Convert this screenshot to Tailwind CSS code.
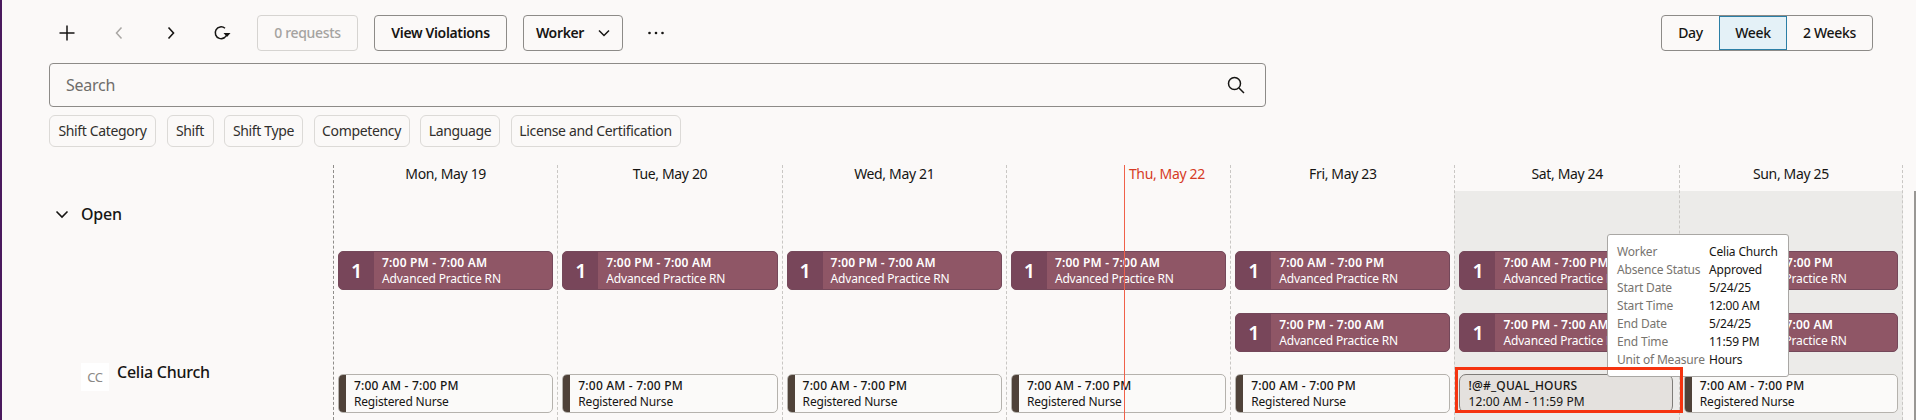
<!DOCTYPE html>
<html lang="en">
<head>
    <meta charset="UTF-8">
    <title>Schedule</title>
    <script src="https://cdn.jsdelivr.net/npm/@tailwindcss/browser@4"></script>
</head>
<body class="bg-[#fbf9f8] text-[#161513] font-['Noto_Sans',sans-serif] text-sm tracking-[-0.35px]">
<div class="relative h-[420px] w-[1916px] overflow-hidden border-l-2 border-[#4a1a5e]">

    <!-- Toolbar -->
    <div class="flex items-center h-[36px] mt-[15px] pl-[47px] pr-[43px]">
        <button class="w-[36px] flex justify-center">
            <svg class="w-[18px] h-[18px]" viewBox="0 0 18 18" fill="none" stroke="#161513" stroke-width="1.5"><path d="M9 1.5v15M1.5 9h15"/></svg>
        </button>
        <button class="w-[16px] ml-[26px] flex justify-center">
            <svg class="w-[10px] h-[14px]" viewBox="0 0 10 14" fill="none" stroke="#a9a7a4" stroke-width="1.5"><path d="M7.5 1.5 2.5 7l5 5.5"/></svg>
        </button>
        <button class="w-[16px] ml-[36px] flex justify-center">
            <svg class="w-[10px] h-[14px]" viewBox="0 0 10 14" fill="none" stroke="#161513" stroke-width="1.6"><path d="M2.5 1.5 7.5 7l-5 5.5"/></svg>
        </button>
        <button class="w-[18px] ml-[34px] flex justify-center">
            <svg class="w-[18px] h-[16px]" viewBox="0 0 18 16" fill="none" stroke="#161513" stroke-width="1.5"><path d="M14 8.5a5.9 5.9 0 1 1-2-5.2"/><path d="M10.5 8h7L14 12z" fill="#161513" stroke="none"/></svg>
        </button>
        <div class="ml-[26px] w-[101px] h-[36px] flex items-center justify-center rounded-[4px] border border-[#d6d4d1] text-[#a5a3a0] font-medium">0 requests</div>
        <button class="ml-[16px] w-[133px] h-[36px] rounded-[4px] border border-[#8d8b88] font-semibold">View Violations</button>
        <button class="ml-[16px] w-[100px] h-[36px] rounded-[4px] border border-[#8d8b88] font-semibold flex items-center justify-center gap-[14px]">
            Worker
            <svg class="w-[12px] h-[8px]" viewBox="0 0 12 8" fill="none" stroke="#161513" stroke-width="1.5"><path d="M1 1.5 6 6.5l5-5"/></svg>
        </button>
        <button class="ml-[23px] w-[20px] flex justify-center">
            <svg class="w-[18px] h-[4px]" viewBox="0 0 18 4" fill="#161513"><circle cx="2.5" cy="2" r="1.3"/><circle cx="9" cy="2" r="1.3"/><circle cx="15.5" cy="2" r="1.3"/></svg>
        </button>
        <div class="ml-auto flex h-[36px] rounded-[4px] border border-[#8d8b88] font-medium">
            <div class="w-[57px] flex items-center justify-center">Day</div>
            <div class="w-[68px] flex items-center justify-center bg-[#e4f1f7] outline outline-[#2b7fa6] -outline-offset-1">Week</div>
            <div class="w-[85px] flex items-center justify-center">2 Weeks</div>
        </div>
    </div>

    <!-- Search -->
    <div class="ml-[47px] mt-[12px] w-[1217px] h-[44px] flex items-center justify-between rounded-[4px] border border-[#8d8b88] pl-[16px] pr-[20px]">
        <span class="text-base text-[#6f6d6a] tracking-[-0.25px]">Search</span>
        <svg class="w-[18px] h-[18px]" viewBox="0 0 18 18" fill="none" stroke="#161513" stroke-width="1.5"><circle cx="7.5" cy="7.5" r="6"/><path d="m12 12 5 5"/></svg>
    </div>

    <!-- Filter chips -->
    <div class="ml-[47px] mt-[8px] flex gap-[10.5px] h-[32px] text-[#312f2c]">
        <div class="w-[107px] flex items-center justify-center rounded-[6px] border border-[#dcdad7]">Shift Category</div>
        <div class="w-[47px] flex items-center justify-center rounded-[6px] border border-[#dcdad7]">Shift</div>
        <div class="w-[79px] flex items-center justify-center rounded-[6px] border border-[#dcdad7]">Shift Type</div>
        <div class="w-[96px] flex items-center justify-center rounded-[6px] border border-[#dcdad7]">Competency</div>
        <div class="w-[80px] flex items-center justify-center rounded-[6px] border border-[#dcdad7]">Language</div>
        <div class="w-[170px] flex items-center justify-center rounded-[6px] border border-[#dcdad7]">License and Certification</div>
    </div>

    <!-- Schedule -->
    <div class="flex mt-[18px] h-[255px]">
        <!-- Row headers -->
        <div class="w-[331px] shrink-0 relative tracking-[-0.25px]">
            <div class="flex items-center h-[24px] mt-[37px] ml-[53px] text-base font-medium">
                <svg class="w-[14px] h-[9px] mr-[12px]" viewBox="0 0 14 9" fill="none" stroke="#161513" stroke-width="1.6"><path d="M1.5 1.5 7 7l5.5-5.5"/></svg>
                Open
            </div>
            <div class="flex mt-[137px] ml-[79px]">
                <div class="w-[28px] h-[28px] bg-white text-[#8b8986] text-[13px] flex items-center justify-center">CC</div>
                <div class="ml-[8px] -mt-[3px] text-base font-medium">Celia Church</div>
            </div>
        </div>

        <!-- Day columns -->
        <div class="grid grid-cols-[repeat(7,224.3px)] relative">
            <div class="border-l border-dashed border-[#8f8d8a] px-[4px]">
                <div class="h-[26px] pb-[8px] flex items-center justify-center">Mon, May 19</div>
                <div class="mt-[60px] h-[39px] flex rounded-[5px] border border-[#74485a] bg-[#8f5666] text-white overflow-hidden">
                    <div class="w-[35px] bg-[#78465a] flex items-center justify-center text-xl font-semibold">1</div>
                    <div class="pl-[8px] flex flex-col justify-center text-xs leading-[16px] tracking-[-0.18px]"><div class="font-semibold tracking-[0.2px]">7:00 PM - 7:00 AM</div><div>Advanced Practice RN</div></div>
                </div>
                <div class="mt-[84px] h-[39px] flex rounded-[5px] border border-[#b5b2ad] bg-[#fbfaf9] overflow-hidden">
                    <div class="w-[7px] bg-[#4f4239]"></div>
                    <div class="pl-[8px] flex flex-col justify-center text-xs leading-[16px] tracking-[-0.18px]"><div class="font-medium tracking-[0.2px]">7:00 AM - 7:00 PM</div><div>Registered Nurse</div></div>
                </div>
            </div>
            <div class="border-l border-dashed border-[#c9c7c4] px-[4px]">
                <div class="h-[26px] pb-[8px] flex items-center justify-center">Tue, May 20</div>
                <div class="mt-[60px] h-[39px] flex rounded-[5px] border border-[#74485a] bg-[#8f5666] text-white overflow-hidden">
                    <div class="w-[35px] bg-[#78465a] flex items-center justify-center text-xl font-semibold">1</div>
                    <div class="pl-[8px] flex flex-col justify-center text-xs leading-[16px] tracking-[-0.18px]"><div class="font-semibold tracking-[0.2px]">7:00 PM - 7:00 AM</div><div>Advanced Practice RN</div></div>
                </div>
                <div class="mt-[84px] h-[39px] flex rounded-[5px] border border-[#b5b2ad] bg-[#fbfaf9] overflow-hidden">
                    <div class="w-[7px] bg-[#4f4239]"></div>
                    <div class="pl-[8px] flex flex-col justify-center text-xs leading-[16px] tracking-[-0.18px]"><div class="font-medium tracking-[0.2px]">7:00 AM - 7:00 PM</div><div>Registered Nurse</div></div>
                </div>
            </div>
            <div class="border-l border-dashed border-[#c9c7c4] px-[4px]">
                <div class="h-[26px] pb-[8px] flex items-center justify-center">Wed, May 21</div>
                <div class="mt-[60px] h-[39px] flex rounded-[5px] border border-[#74485a] bg-[#8f5666] text-white overflow-hidden">
                    <div class="w-[35px] bg-[#78465a] flex items-center justify-center text-xl font-semibold">1</div>
                    <div class="pl-[8px] flex flex-col justify-center text-xs leading-[16px] tracking-[-0.18px]"><div class="font-semibold tracking-[0.2px]">7:00 PM - 7:00 AM</div><div>Advanced Practice RN</div></div>
                </div>
                <div class="mt-[84px] h-[39px] flex rounded-[5px] border border-[#b5b2ad] bg-[#fbfaf9] overflow-hidden">
                    <div class="w-[7px] bg-[#4f4239]"></div>
                    <div class="pl-[8px] flex flex-col justify-center text-xs leading-[16px] tracking-[-0.18px]"><div class="font-medium tracking-[0.2px]">7:00 AM - 7:00 PM</div><div>Registered Nurse</div></div>
                </div>
            </div>
            <div class="border-l border-dashed border-[#c9c7c4] px-[4px]">
                <div class="h-[26px] pb-[8px] flex items-center pl-[118px] text-[#d63b25]">Thu, May 22</div>
                <div class="mt-[60px] h-[39px] flex rounded-[5px] border border-[#74485a] bg-[#8f5666] text-white overflow-hidden">
                    <div class="w-[35px] bg-[#78465a] flex items-center justify-center text-xl font-semibold">1</div>
                    <div class="pl-[8px] flex flex-col justify-center text-xs leading-[16px] tracking-[-0.18px]"><div class="font-semibold tracking-[0.2px]">7:00 PM - 7:00 AM</div><div>Advanced Practice RN</div></div>
                </div>
                <div class="mt-[84px] h-[39px] flex rounded-[5px] border border-[#b5b2ad] bg-[#fbfaf9] overflow-hidden">
                    <div class="w-[7px] bg-[#4f4239]"></div>
                    <div class="pl-[8px] flex flex-col justify-center text-xs leading-[16px] tracking-[-0.18px]"><div class="font-medium tracking-[0.2px]">7:00 AM - 7:00 PM</div><div>Registered Nurse</div></div>
                </div>
            </div>
            <div class="border-l border-dashed border-[#c9c7c4] px-[4px]">
                <div class="h-[26px] pb-[8px] flex items-center justify-center">Fri, May 23</div>
                <div class="mt-[60px] h-[39px] flex rounded-[5px] border border-[#74485a] bg-[#8f5666] text-white overflow-hidden">
                    <div class="w-[35px] bg-[#78465a] flex items-center justify-center text-xl font-semibold">1</div>
                    <div class="pl-[8px] flex flex-col justify-center text-xs leading-[16px] tracking-[-0.18px]"><div class="font-semibold tracking-[0.2px]">7:00 AM - 7:00 PM</div><div>Advanced Practice RN</div></div>
                </div>
                <div class="mt-[23px] h-[39px] flex rounded-[5px] border border-[#74485a] bg-[#8f5666] text-white overflow-hidden">
                    <div class="w-[35px] bg-[#78465a] flex items-center justify-center text-xl font-semibold">1</div>
                    <div class="pl-[8px] flex flex-col justify-center text-xs leading-[16px] tracking-[-0.18px]"><div class="font-semibold tracking-[0.2px]">7:00 PM - 7:00 AM</div><div>Advanced Practice RN</div></div>
                </div>
                <div class="mt-[22px] h-[39px] flex rounded-[5px] border border-[#b5b2ad] bg-[#fbfaf9] overflow-hidden">
                    <div class="w-[7px] bg-[#4f4239]"></div>
                    <div class="pl-[8px] flex flex-col justify-center text-xs leading-[16px] tracking-[-0.18px]"><div class="font-medium tracking-[0.2px]">7:00 AM - 7:00 PM</div><div>Registered Nurse</div></div>
                </div>
            </div>
            <div class="border-l border-dashed border-[#c9c7c4] px-[4px] bg-[linear-gradient(#fbf9f8_26px,#ecebe9_26px)]">
                <div class="h-[26px] pb-[8px] flex items-center justify-center">Sat, May 24</div>
                <div class="mt-[60px] h-[39px] flex rounded-[5px] border border-[#74485a] bg-[#8f5666] text-white overflow-hidden">
                    <div class="w-[35px] bg-[#78465a] flex items-center justify-center text-xl font-semibold">1</div>
                    <div class="pl-[8px] flex flex-col justify-center text-xs leading-[16px] tracking-[-0.18px]"><div class="font-semibold tracking-[0.2px]">7:00 AM - 7:00 PM</div><div>Advanced Practice RN</div></div>
                </div>
                <div class="mt-[23px] h-[39px] flex rounded-[5px] border border-[#74485a] bg-[#8f5666] text-white overflow-hidden">
                    <div class="w-[35px] bg-[#78465a] flex items-center justify-center text-xl font-semibold">1</div>
                    <div class="pl-[8px] flex flex-col justify-center text-xs leading-[16px] tracking-[-0.18px]"><div class="font-semibold tracking-[0.2px]">7:00 PM - 7:00 AM</div><div>Advanced Practice RN</div></div>
                </div>
                <div class="mt-[22px] h-[39px] mr-[2px] flex flex-col justify-center rounded-[7px] border border-[#7f7c78] bg-[#e4e1de] pl-[8px] text-xs leading-[16px] tracking-[-0.18px]">
                    <div class="font-medium tracking-[0.2px]">!@#_QUAL_HOURS</div><div class="tracking-[0.1px]">12:00 AM - 11:59 PM</div>
                </div>
            </div>
            <div class="border-x border-dashed border-[#c9c7c4] px-[4px] bg-[linear-gradient(#fbf9f8_26px,#ecebe9_26px)]">
                <div class="h-[26px] pb-[8px] flex items-center justify-center">Sun, May 25</div>
                <div class="mt-[60px] h-[39px] flex rounded-[5px] border border-[#74485a] bg-[#8f5666] text-white overflow-hidden">
                    <div class="w-[35px] bg-[#78465a] flex items-center justify-center text-xl font-semibold">1</div>
                    <div class="pl-[8px] flex flex-col justify-center text-xs leading-[16px] tracking-[-0.18px]"><div class="font-semibold tracking-[0.2px]">7:00 AM - 7:00 PM</div><div>Advanced Practice RN</div></div>
                </div>
                <div class="mt-[23px] h-[39px] flex rounded-[5px] border border-[#74485a] bg-[#8f5666] text-white overflow-hidden">
                    <div class="w-[35px] bg-[#78465a] flex items-center justify-center text-xl font-semibold">1</div>
                    <div class="pl-[8px] flex flex-col justify-center text-xs leading-[16px] tracking-[-0.18px]"><div class="font-semibold tracking-[0.2px]">7:00 PM - 7:00 AM</div><div>Advanced Practice RN</div></div>
                </div>
                <div class="mt-[22px] h-[39px] flex rounded-[5px] border border-[#b5b2ad] bg-[#fbfaf9] overflow-hidden">
                    <div class="w-[7px] bg-[#4f4239]"></div>
                    <div class="pl-[8px] flex flex-col justify-center text-xs leading-[16px] tracking-[-0.18px]"><div class="font-medium tracking-[0.2px]">7:00 AM - 7:00 PM</div><div>Registered Nurse</div></div>
                </div>
            </div>

            <!-- Current time marker -->
            <div class="absolute top-0 bottom-0 left-[791px] w-px bg-[#f0614a]"></div>

            <!-- Absence tooltip -->
            <div class="absolute left-[1274px] top-[69px] w-[182px] h-[143px] bg-white border border-[#a9a7a4] rounded-[3px] pl-[9px] pt-[8px] text-xs leading-[18px] tracking-[-0.17px]">
                <div class="grid grid-cols-[92px_1fr]">
                    <span class="text-[#77746f]">Worker</span><span>Celia Church</span>
                    <span class="text-[#77746f]">Absence Status</span><span>Approved</span>
                    <span class="text-[#77746f]">Start Date</span><span>5/24/25</span>
                    <span class="text-[#77746f]">Start Time</span><span>12:00 AM</span>
                    <span class="text-[#77746f]">End Date</span><span>5/24/25</span>
                    <span class="text-[#77746f]">End Time</span><span>11:59 PM</span>
                    <span class="text-[#77746f]">Unit of Measure</span><span>Hours</span>
                </div>
            </div>

            <!-- Selected shift outline -->
            <div class="absolute left-[1122px] top-[202px] w-[228px] h-[46px] border-[3px] border-[#f5330f]"></div>
        </div>
    </div>

    <!-- Scrollbar thumb -->
    <div class="absolute right-0 top-[191px] bottom-0 w-[2px] bg-[#999794]"></div>
</div>
</body>
</html>
